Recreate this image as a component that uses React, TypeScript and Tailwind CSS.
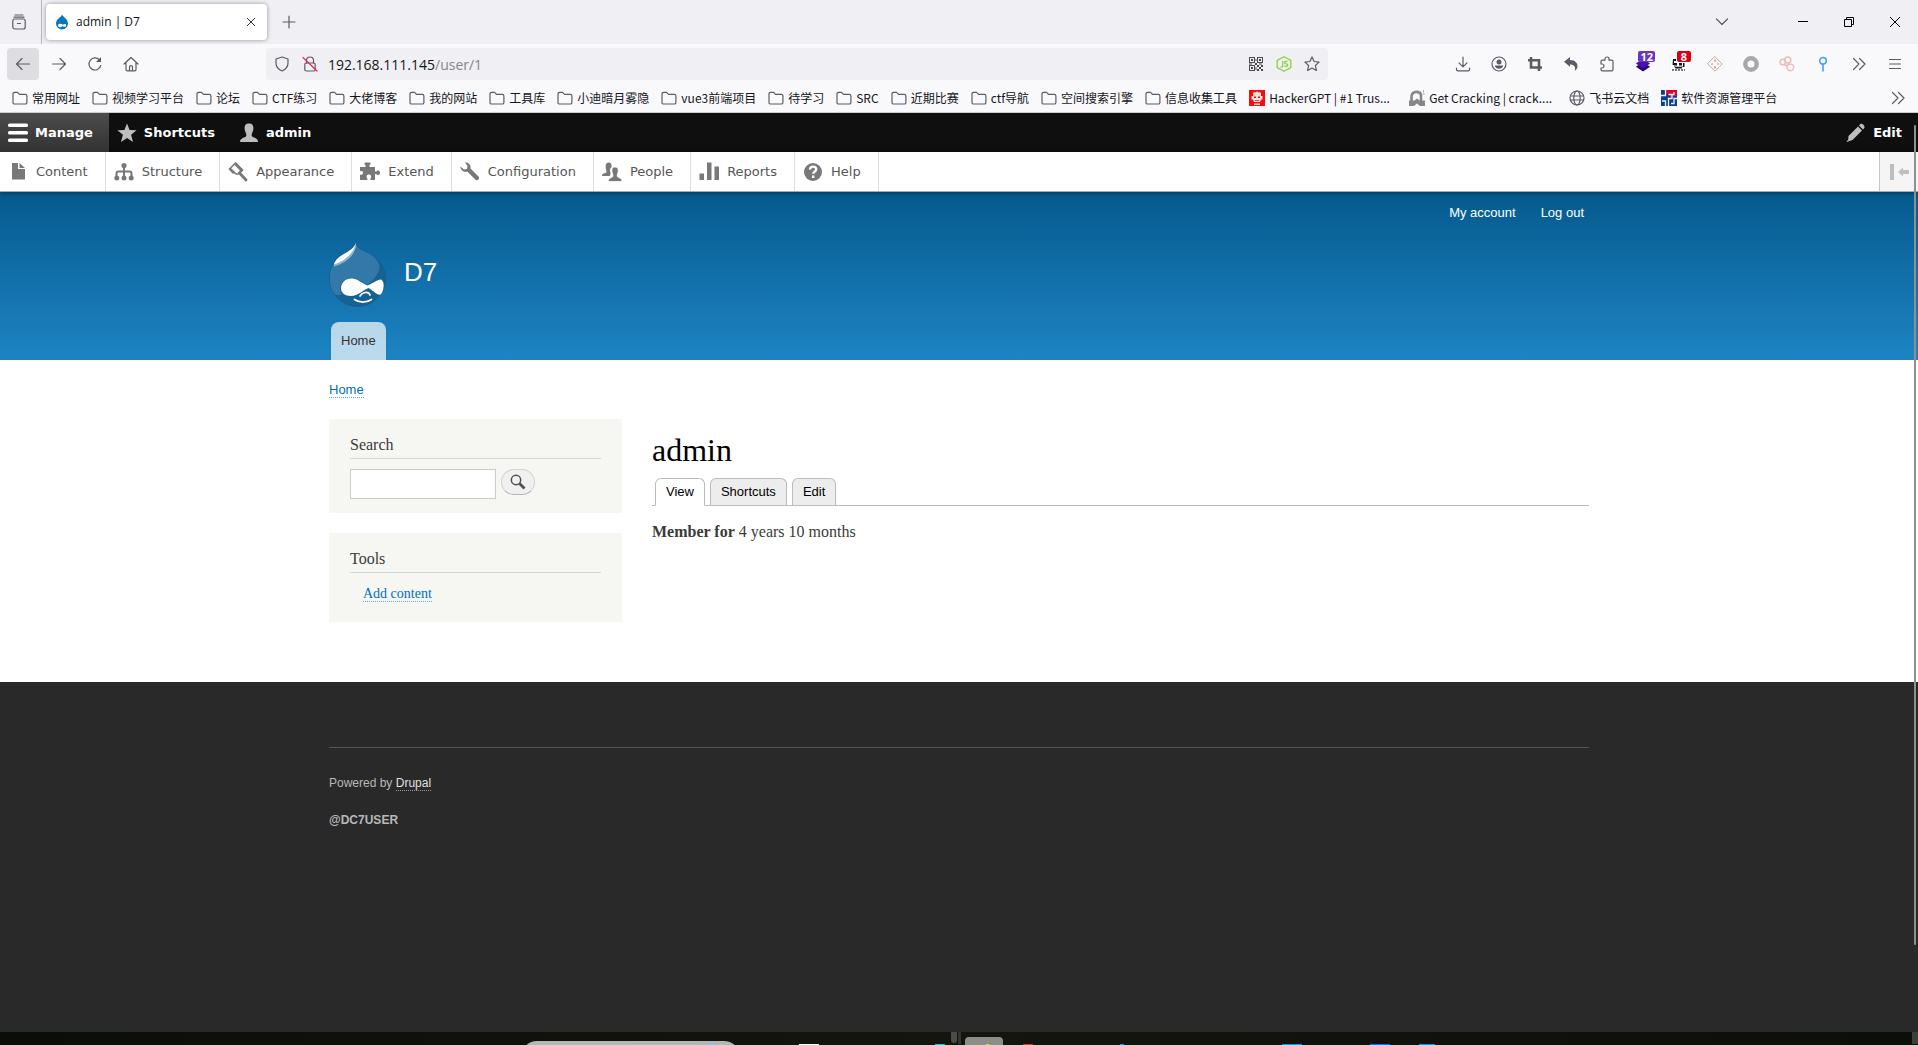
import { ReactNode } from "react";

const folders = [
  "常用网址",
  "视频学习平台",
  "论坛",
  "CTF练习",
  "大佬博客",
  "我的网站",
  "工具库",
  "小迪暗月雾隐",
  "vue3前端项目",
  "待学习",
  "SRC",
  "近期比赛",
  "ctf导航",
  "空间搜索引擎",
  "信息收集工具",
];

// Firefox-style 16px outline icon
function Icon({ children, size = 16, color = "#5b5b66" }: { children: ReactNode; size?: number; color?: string }) {
  return (
    <svg
      width={size}
      height={size}
      viewBox="0 0 16 16"
      fill="none"
      stroke={color}
      strokeWidth="1.2"
      strokeLinecap="round"
      strokeLinejoin="round"
      className="shrink-0"
    >
      {children}
    </svg>
  );
}

// Solid 20px icon used in the admin toolbar
function ToolbarIcon({ children, color = "#787878" }: { children: ReactNode; color?: string }) {
  return (
    <svg width="20" height="20" viewBox="0 0 20 20" fill={color} className="shrink-0">
      {children}
    </svg>
  );
}

function NavButton({ label, active, children }: { label: string; active?: boolean; children: ReactNode }) {
  return (
    <button
      aria-label={label}
      className={`relative mx-0.5 flex h-8 w-8 items-center justify-center rounded ${active ? "bg-[#dddde2]" : ""}`}
    >
      {children}
    </button>
  );
}

function Badge({ color, children }: { color: string; children: ReactNode }) {
  return (
    <span
      className={`absolute top-[3px] right-1 h-[11px] min-w-3.5 rounded-xs px-0.5 text-center font-['Open_Sans',sans-serif] text-[11px] leading-[11px] font-bold text-white ${color}`}
    >
      {children}
    </span>
  );
}

function TabStrip() {
  return (
    <div className="flex h-11 items-center bg-[#f0f0f4]">
      <button aria-label="Recent browsing" className="flex h-11 w-[42px] items-center border-r border-[#b5b5bc] pl-[11px]">
        <Icon>
          <path d="M4 1h8M3 3.200h10" />
          <rect x="1.800" y="5" width="12.400" height="10" rx="2" />
          <path d="M6.500 9.500h3" />
        </Icon>
      </button>
      <div className="ml-1 flex h-9 w-[221px] items-center rounded bg-white pr-1.5 pl-2 shadow-[0_0_4px_rgba(0,0,0,0.4)]">
        <svg width="16" height="16" viewBox="0 0 16 16" className="shrink-0">
          <path d="M8 .5C8.400 2.600 14 4.500 14 9.500a6 6 0 0 1-12 0C2 4.500 7.500 3.500 8 .5z" fill="#0678be" />
          <path d="M4 11.500c0-2.300 3-2.200 4.500-.8 1.500-1 3.700-1.400 3.700.7 0 2-2 1.700-3.600.6C7 13.600 4 13.800 4 11.500z" fill="#fff" />
        </svg>
        <span className="ml-1.5 flex-1 font-['Open_Sans',sans-serif] text-[12px] text-[#15141a]">admin | D7</span>
        <button aria-label="Close tab" className="flex w-5 justify-center">
          <Icon size={12} color="#15141a">
            <path d="M3 3l10 10M13 3L3 13" />
          </Icon>
        </button>
      </div>
      <button aria-label="New tab" className="ml-1.5 flex w-8 items-center justify-center">
        <Icon>
          <path d="M8 2v12M2 8h12" />
        </Icon>
      </button>
      <div className="flex-1" />
      <button aria-label="List all tabs" className="mr-9 flex w-11 justify-center">
        <Icon>
          <path d="M2.500 5L8 10.500 13.500 5" />
        </Icon>
      </button>
      <button aria-label="Minimize" className="flex w-[46px] justify-center">
        <svg width="10" height="10" viewBox="0 0 10 10" stroke="#000" fill="none">
          <path d="M0 4.500h10" />
        </svg>
      </button>
      <button aria-label="Restore" className="flex w-[46px] justify-center">
        <svg width="10" height="10" viewBox="0 0 10 10" stroke="#000" fill="none">
          <path d="M.5 2.500h7v7h-7zM2.500 2.500v-2h7v7h-2" />
        </svg>
      </button>
      <button aria-label="Close window" className="flex w-[46px] justify-center">
        <svg width="10" height="10" viewBox="0 0 10 10" stroke="#000" fill="none">
          <path d="M0 0l10 10M10 0L0 10" />
        </svg>
      </button>
    </div>
  );
}

function AddressBar() {
  return (
    <div className="flex h-8 flex-[9] items-center rounded bg-[#f0f0f4] pr-0.5 pl-2">
      <Icon>
        <path d="M8 1L2 3v4c0 4 2.500 6.500 6 8 3.500-1.500 6-4 6-8V3z" />
      </Icon>
      <span className="ml-3">
        <Icon>
          <path d="M4.500 7V4.500a3.500 3.500 0 0 1 7 0V7" />
          <rect x="2.800" y="7" width="10.400" height="8" rx="1.500" />
          <path d="M1 1.500l14 13.500" stroke="#e22850" />
        </Icon>
      </span>
      <div className="ml-2.5 flex-1 font-['Open_Sans',sans-serif] text-[14px] text-[#15141a]">
        192.168.111.145<span className="text-[#85858c]">/user/1</span>
      </div>
      <button aria-label="QR code" className="flex w-7 justify-center">
        <svg width="14" height="14" viewBox="0 0 14 14" fill="#4a4a52">
          <path
            fillRule="evenodd"
            d="M0 0h6v6H0zM1 1v4h4V1zM2 2h2v2H2zM8 0h6v6H8zM9 1v4h4V1zM10 2h2v2h-2zM0 8h6v6H0zM1 9v4h4V9zM2 10h2v2H2zM8 8h2v2H8zM12 8h2v2h-2zM10 10h2v2h-2zM8 12h2v2H8zM12 12h2v2h-2zM6 6h2v2H6zM0 6.500h3v1H0zM10 6.500h3v1h-3zM6.500 2h1v2h-1zM6.500 10h1v3h-1z"
          />
        </svg>
      </button>
      <button aria-label="Node modules" className="flex w-7 justify-center">
        <svg width="16" height="16" viewBox="0 0 16 16" fill="none" stroke="#8ed23f" strokeWidth="1.300" strokeLinejoin="round">
          <path d="M8 .7l6.800 3.700v7.200L8 15.300l-6.800-3.700V4.400z" />
          <path d="M6.700 5v5.200c0 1-1.200 1.200-2.200.6M11.600 5.700C10 5 8.500 5.300 8.600 6.600c.1 1.600 3.200.8 3.200 2.500 0 1.300-2 1.500-3.400.8" />
        </svg>
      </button>
      <button aria-label="Bookmark this page" className="flex w-7 justify-center">
        <Icon>
          <path d="M8 .9l2.100 4.600 5 .6-3.700 3.400 1 5L8 12l-4.400 2.500 1-5L.9 6.100l5-.6z" />
        </Icon>
      </button>
    </div>
  );
}

function NavBar() {
  return (
    <div className="flex h-10 items-center bg-[#f9f9fb] px-[5px]">
      <NavButton label="Back" active>
        <Icon>
          <path d="M14.500 8h-13M7 2.500L1.500 8 7 13.500" />
        </Icon>
      </NavButton>
      <NavButton label="Forward">
        <Icon>
          <path d="M1.500 8h13M9 2.500L14.500 8 9 13.500" />
        </Icon>
      </NavButton>
      <NavButton label="Reload">
        <Icon>
          <path d="M13.800 9.500A6 6 0 1 1 12.500 4" />
          <path d="M14 1v5H9z" fill="#5b5b66" stroke="none" />
        </Icon>
      </NavButton>
      <NavButton label="Home">
        <Icon>
          <path d="M1 8l7-6.500L15 8M3 7v6.500c0 .8.500 1.300 1.300 1.300h7.400c.8 0 1.300-.5 1.300-1.300V7" />
          <path d="M6.500 14.500V11c0-1.800 3-1.800 3 0v3.500" />
        </Icon>
      </NavButton>
      <div className="flex-1" />
      <AddressBar />
      <div className="flex-1" />
      <NavButton label="Downloads">
        <Icon>
          <path d="M8 1v9.500M4 6.800l4 4 4-4M1.500 12v1.500c0 .8.500 1.300 1.300 1.300h10.400c.8 0 1.300-.5 1.300-1.300V12" />
        </Icon>
      </NavButton>
      <NavButton label="Account">
        <Icon>
          <circle cx="8" cy="8" r="7" />
          <circle cx="8" cy="6" r="2.500" fill="#5b5b66" stroke="none" />
          <path d="M3.800 9.500h8.400c-.5 2.200-2.200 3.300-4.200 3.300s-3.700-1.100-4.200-3.300z" fill="#5b5b66" stroke="none" />
        </Icon>
      </NavButton>
      <NavButton label="Screenshot">
        <svg width="16" height="16" viewBox="0 0 16 16" fill="none" stroke="#5b5b66" strokeWidth="2.600">
          <path d="M4 1v10.500h11M1 4.300h11V15" />
        </svg>
      </NavButton>
      <NavButton label="Undo">
        <svg width="16" height="16" viewBox="0 0 16 16" fill="#5b5b66">
          <path d="M1 5.800L7 1v3c5 0 7.500 3 7.500 6 0 2-1 3.800-2.700 4.800C13 11 11 8.500 7 8.500v2.300z" />
        </svg>
      </NavButton>
      <NavButton label="Extensions">
        <Icon>
          <path d="M2 6V5.500C2 4.700 2.500 4.200 3.300 4.200H6V3a2 2 0 0 1 4 0v1.200h2.700c.8 0 1.300.5 1.300 1.300v8c0 .8-.5 1.300-1.300 1.300H3.300c-.8 0-1.300-.5-1.300-1.300V12h1a2 2 0 0 0 0-4H2z" />
        </Icon>
      </NavButton>
      <NavButton label="Layers">
        <svg width="16" height="16" viewBox="0 0 18 18">
          <path d="M1 12l8-5 8 5-8 5.500z" fill="#2b0a72" />
          <path d="M1 8.500l8-5.500 8 5.500-8 5.500z" fill="#4a0fb5" />
        </svg>
        <Badge color="bg-[#6a35c2]">12</Badge>
      </NavButton>
      <NavButton label="Blocker">
        <svg width="16" height="16" viewBox="0 0 16 16" fill="#151515">
          <path fill="#fff" d="M0 0h16v16H0z" />
          <path d="M2 3h3v2H3v4H1.500zM3 7h3v2.500H3zM8 7h3v2.500H8zM12 7h1.500v4H12zM3 10l2 .8h5l2-.8-1.500 2.500h-6z" />
          <path d="M1 14h13" stroke="#777" strokeWidth="2" strokeDasharray="2 1" />
        </svg>
        <Badge color="bg-[#d80012]">8</Badge>
      </NavButton>
      <NavButton label="Container">
        <Icon color="#c39a8d">
          <path d="M8 .8L15.200 8 8 15.200.8 8z" strokeWidth=".9" />
          <path d="M8 4v1.200M8 10.800V12M4.800 8h.4M10.800 8h.4" strokeWidth="1.600" />
        </Icon>
      </NavButton>
      <NavButton label="Proxy">
        <svg width="16" height="16" viewBox="0 0 16 16" fill="none" stroke="#a8a8a8" strokeWidth="4.400">
          <circle cx="8" cy="8" r="5.700" />
        </svg>
      </NavButton>
      <NavButton label="Rings">
        <svg width="16" height="16" viewBox="0 0 16 16" fill="none" stroke="#ecbcbc" strokeWidth="1.500">
          <circle cx="3.800" cy="6" r="2.800" />
          <circle cx="8.800" cy="4" r="3" />
          <circle cx="11.300" cy="11.300" r="3.400" />
          <path d="M5 8.500l3 1.500" />
        </svg>
      </NavButton>
      <NavButton label="Pin">
        <svg width="16" height="16" viewBox="0 0 16 16" fill="none" stroke="#409eff" strokeWidth="1.600">
          <circle cx="8" cy="4.800" r="3.300" />
          <path d="M8 8v7.500" />
        </svg>
      </NavButton>
      <NavButton label="More tools">
        <Icon>
          <path d="M2.500 2.500L8 8l-5.500 5.500M8.500 2.500L14 8l-5.500 5.500" />
        </Icon>
      </NavButton>
      <NavButton label="Menu">
        <Icon>
          <path d="M2.500 3.500h11M2.500 8h11M2.500 12.500h11" />
        </Icon>
      </NavButton>
    </div>
  );
}

function BookmarksBar() {
  return (
    <div className="flex h-[29px] items-center gap-3 border-b border-[#cccccf] bg-[#f9f9fb] pr-3 pl-3 font-['Noto_Sans_CJK_SC',sans-serif] text-[12px] leading-4 whitespace-nowrap text-[#15141a]">
      {folders.map((name) => (
        <a key={name} href="#" className="flex items-center gap-1">
          <Icon>
            <path d="M1 4c0-1 .6-1.700 1.600-1.700h3L7.500 4.300h5.800c1 0 1.600.7 1.600 1.600v6.500c0 1-.6 1.600-1.600 1.600H2.600c-1 0-1.600-.6-1.600-1.600z" />
          </Icon>
          {name}
        </a>
      ))}
      <a href="#" className="flex w-[148px] items-center gap-1">
        <svg width="16" height="16" viewBox="0 0 16 16" className="shrink-0">
          <path fill="#f80d0d" d="M0 0h16v16H0z" />
          <path
            d="M4 6V3l1.500-1 1.500.5L8 1l1 1.500 1.500-.5L12 3v3h1.500v3.500H12L11 12H5L4 9.500H2.500V6zM5 13.500h6V15H5z"
            fill="#fde0dd"
          />
          <path d="M5 6.500h2V8H5zM9 6.500h2V8H9zM6 10h4v.8H6z" fill="#e01010" />
        </svg>
        HackerGPT | #1 Trus...
      </a>
      <a href="#" className="flex w-[148px] items-center gap-1">
        <svg width="16" height="16" viewBox="0 0 16 16" className="shrink-0">
          <path d="M2.500 11V7a5 5 0 0 1 9.500-2.200V11" fill="none" stroke="#868686" strokeWidth="2.600" />
          <path d="M0 10.500h5.500l2.500-2 2.500 2H16V16h-5l-3-2.500L5 16H0z" fill="#868686" />
          <path d="M11 1l1.500 1.500M14.500 0v2.500M13.500 4H16" stroke="#b0b0b0" />
        </svg>
        Get Cracking | crack....
      </a>
      <a href="#" className="flex items-center gap-1">
        <Icon>
          <circle cx="8" cy="8" r="7" />
          <ellipse cx="8" cy="8" rx="3.200" ry="7" />
          <path d="M1.500 6h13M1.500 10h13" />
        </Icon>
        飞书云文档
      </a>
      <a href="#" className="flex items-center gap-1">
        <svg width="16" height="16" viewBox="0 0 16 16" className="shrink-0">
          <path fill="#0b3f8f" d="M0 0h16v16H0z" />
          <path fill="#e2002b" d="M5 0h11v6h-5v2H9V4H5z" />
          <path d="M4.500 0v5.500H0M7.500 4.500h5.500V2M4.500 16v-5H1M7.500 16V8.500H11V5M16 8.500h-3v5h-3" fill="none" stroke="#eef2fa" strokeWidth="1.300" />
        </svg>
        软件资源管理平台
      </a>
      <div className="flex-1" />
      <button aria-label="Show more bookmarks">
        <Icon>
          <path d="M2.500 2.500L8 8l-5.500 5.500M8.500 2.500L14 8l-5.500 5.500" />
        </Icon>
      </button>
    </div>
  );
}

const trayItems = [
  { label: "Content", icon: <path d="M4 1h6v6h7v10.500H4zM11.500 1L17 6h-5.500z" /> },
  {
    label: "Structure",
    icon: (
      <>
        <circle cx="10" cy="3.500" r="2.600" />
        <path d="M10 5v11M2.500 15v-3.500c0-1.500.8-2 2-2h11c1.200 0 2 .5 2 2V15" fill="none" stroke="#787878" strokeWidth="2" />
        <circle cx="2.800" cy="16" r="2.500" />
        <circle cx="10" cy="16" r="2.500" />
        <circle cx="17.200" cy="16" r="2.500" />
      </>
    ),
  },
  {
    label: "Appearance",
    icon: (
      <>
        <path d="M1.500 7L7.500 1l7 7-3.500 3.500c-1 1-2.500.5-3.500 0z" fill="none" stroke="#787878" strokeWidth="1.500" />
        <path d="M6 2.500L8 .5 15.500 8 11 12.500 9.500 11 12 8.500z" />
        <path d="M.8 7.500L5 12l2-2-4.500-4.500z" />
        <path d="M12 11.500l6 6.500" stroke="#787878" strokeWidth="2.800" strokeLinecap="round" />
      </>
    ),
  },
  {
    label: "Extend",
    icon: (
      <path d="M0 5h5.500V3C4 2.500 4 .5 5.500.5h4C11 .5 11 2.500 9.500 3v2H15v4.500h1.500c.5-1.600 3.500-1.500 3.500 1.200s-3 2.800-3.500 1.300H15V18h-4.500v-2c1.300-.8 1-3.600-1.600-3.600S6 15.200 7.300 16v2H0v-5.500c1.800.8 3-.2 3-1.700S1.800 8.500 0 9.300z" />
    ),
  },
  {
    label: "Configuration",
    icon: (
      <path d="M5 .5C8.500 0 11 2.500 10.500 6.500l8 8c1.800 2-1 5-3 3.200l-8-8C4 10.500.5 8.500.5 4.500L4 7.500l3-.5.500-3z" />
    ),
  },
  {
    label: "People",
    icon: (
      <>
        <path d="M6.500.5c3 0 3.500 2.500 2.800 5C7.500 6.500 7.800 9 8.600 11L8 14H0c0-3 3.200-2.500 4.400-3.500C5 9 3.600 8 3.600 5S4.500.5 6.500.5z" />
        <path
          d="M13 5c3 0 3.500 2.200 3.200 4.800-.2 1.700-1.400 2.700-.8 4.700C16.500 16 20 15.800 20 19.500H6.200c0-3.700 3.600-3.500 4.600-5 .5-2-.6-3-.8-4.700C9.700 7.200 10 5 13 5z"
          stroke="#fff"
          strokeWidth=".8"
        />
      </>
    ),
  },
  { label: "Reports", icon: <path d="M.5 11.500h4.500V18H.5zM8 .5h4.500V18H8zM15.500 4.500H20V18h-4.500z" /> },
  {
    label: "Help",
    icon: (
      <>
        <circle cx="10" cy="10" r="9" />
        <path d="M7 7.500c0-4 6.200-3.600 6.200-.2 0 2.400-3 2.200-3 4.500M10.200 13.500v2.500" fill="none" stroke="#fff" strokeWidth="2.400" />
      </>
    ),
  },
];

function AdminToolbar() {
  return (
    <div className="relative z-10 font-['DejaVu_Sans',sans-serif] text-[13px] leading-5">
      <nav className="flex h-[39px] bg-[#0f0f0f] font-bold text-white">
        <a href="#" className="flex items-center gap-[7px] bg-linear-to-b from-[#4c4c4c] to-[#333] pr-4 pl-2">
          <ToolbarIcon color="#fff">
            <rect y=".5" width="20" height="3.600" rx="1.500" />
            <rect y="8" width="20" height="3.600" rx="1.500" />
            <rect y="15.500" width="20" height="3.600" rx="1.500" />
          </ToolbarIcon>
          Manage
        </a>
        <a href="#" className="flex items-center gap-[7px] pr-4 pl-2">
          <ToolbarIcon color="#bebebe">
            <path d="M10 .5l2.600 6.500 7 .3-5.500 4.400L16 19l-6-4-6 4 1.900-7.300L.4 7.300l7-.3z" />
          </ToolbarIcon>
          Shortcuts
        </a>
        <a href="#" className="flex items-center gap-[7px] pr-4 pl-2">
          <ToolbarIcon color="#bebebe">
            <path d="M10 .5c4 0 4.800 3 4.200 6.500-.4 2.500-2 3.500-1.400 6 1 2 6.200 1.500 6.200 6H1c0-4.500 5.200-4 6.200-6 .6-2.500-1-3.500-1.400-6C5.200 3.500 6 .5 10 .5z" />
          </ToolbarIcon>
          admin
        </a>
        <button className="ml-auto flex items-center gap-[7px] pr-4">
          <ToolbarIcon color="#bebebe">
            <path d="M2.500 13L12 3.500 16 7.500 6.500 17 2 18.500zM13 2.500l1.500-1.500c1.500-1 5 2 3.800 4L17 6.500zM1 17l1.500 1.500L.8 19z" />
          </ToolbarIcon>
          Edit
        </button>
      </nav>
      <nav className="flex h-10 border-b border-[#aaa] bg-white text-[#565656] shadow-[0_0_5px_rgba(0,0,0,0.6)]">
        {trayItems.map((item) => (
          <a key={item.label} href="#" className="flex items-center gap-2 border-r border-[#ddd] pr-[17px] pl-2">
            <ToolbarIcon>{item.icon}</ToolbarIcon>
            {item.label}
          </a>
        ))}
        <button aria-label="Vertical orientation" className="ml-auto flex w-[39px] items-center border-l border-[#c4c4c4] bg-[#f5f5f5] pl-2.5">
          <svg width="20" height="16" viewBox="0 0 20 16" fill="#bebebe">
            <path d="M0 0h4v16H0zM8 8l5-4.500V6h6v4h-6v2.500z" />
          </svg>
        </button>
      </nav>
    </div>
  );
}

function Druplicon() {
  return (
    <svg width="57" height="65" viewBox="0 0 57 65" className="shrink-0">
      <path
        d="M26.500.5C28 7 34 8.500 40 11.500 50 17 56.500 26 56.500 36.500a28 28 0 0 1-56 0C.5 26 5 19 12 14 19 9 26 7 26.500.5z"
        fill="#176294"
        stroke="#1c5a85"
        strokeWidth=".8"
      />
      <path
        d="M26.500 1C28 7 34 8.500 40 11.500c5 2.700 10 8 10.500 13C50 33 44 38 38 43c-6-4-14-9-22-5-6 3-6 11-3 15H6C2.500 48 .8 43 .8 36.500.8 26 5 19 12 14 19 9 26 7 26.500 1z"
        fill="#3278a8"
      />
      <path d="M27 1c1 9-7 19-22 23.500 0-4 4-8 9-10.500C20 10.500 26 7 27 1z" fill="#8fb5ce" />
      <path d="M26.500.5C27 7 19 18 5 22.500 6 18 10 15 14 12.500 20 9 26 6 26.500.5z" fill="#fff" />
      <path
        d="M12 46.500C12 40 17 36 23.500 36.500 29 37 34 42 38.500 43.500 43 42 47 38 52 37.500c4 1.500 3 11 .2 14.500-3 3-9-4.500-12.700-6C34 48 29 54 22 54c-6 0-10-3-10-7.500z"
        fill="#fff"
      />
      <path d="M25.500 57.500c5 3.500 12 3.500 17 0M31 54c2-3.500 8-5.500 10-1" fill="none" stroke="#fff" strokeWidth="1.700" strokeLinecap="round" />
    </svg>
  );
}

function SiteHeader() {
  return (
    <header className="h-[168px] bg-linear-to-b from-[#055a8e] to-[#1d84c3]">
      <div className="mx-auto max-w-[1290px] px-[15px] pt-3">
        <nav className="flex justify-end gap-[25px] pr-[5px] text-[13px] leading-[18px] text-white">
          <a href="#">My account</a>
          <a href="#">Log out</a>
        </nav>
        <div className="mt-5 flex items-start">
          <Druplicon />
          <a href="#" className="mt-3.5 ml-[18px] text-[26px] leading-8 text-white">
            D7
          </a>
        </div>
        <nav className="mt-[15px] ml-0.5 flex">
          <a href="#" className="flex h-[38px] items-center rounded-t-lg bg-white/70 px-2.5 text-[13px] text-[#333]">
            Home
          </a>
        </nav>
      </div>
    </header>
  );
}

function Main() {
  return (
    <main className="bg-white">
      <div className="mx-auto max-w-[1290px] px-[15px] pt-5 pb-[60px]">
        <nav className="text-[13px] leading-5">
          <a href="#" className="border-b border-dotted border-[#5ea8d3] text-[#0071b3]">
            Home
          </a>
        </nav>
        <div className="mt-[19px] flex gap-[30px] font-['Liberation_Serif',serif] text-[#3b3b3b]">
          <aside className="flex w-[293px] shrink-0 flex-col gap-5">
            <section className="bg-[#f6f6f2] px-[21px] pt-4 pb-3.5">
              <h2 className="border-b border-[#d3d7d9] pb-[3px] text-[16px] leading-5">Search</h2>
              <form className="mt-2.5 flex items-start gap-[5px]">
                <input type="text" aria-label="Search" className="h-[30px] w-[146px] border border-[#ccc] bg-white px-1 text-[14px]" />
                <button
                  type="button"
                  aria-label="Submit search"
                  className="flex h-[26px] w-[34px] items-center justify-center rounded-full border border-[#d4d4d4] border-b-[#b4b4b4] bg-[#f0f0f0]"
                >
                  <svg width="16" height="16" viewBox="0 0 16 16" fill="none" stroke="#505050">
                    <circle cx="6" cy="6" r="4.700" strokeWidth="1.500" />
                    <path d="M9.500 9.500l5 5" strokeWidth="2.800" />
                  </svg>
                </button>
              </form>
            </section>
            <section className="bg-[#f6f6f2] px-[21px] pt-4 pb-[18px]">
              <h2 className="border-b border-[#d3d7d9] pb-[3px] text-[16px] leading-5">Tools</h2>
              <div className="mt-[11px] pl-[13px] text-[14px] leading-5">
                <a href="#" className="border-b border-dotted border-[#5ea8d3] text-[#0071b3]">
                  Add content
                </a>
              </div>
            </section>
          </aside>
          <section className="flex-1">
            <h1 className="mt-[13px] text-[32px] leading-9 text-black">admin</h1>
            <nav className="mt-2.5 flex gap-[5px] border-b border-[#bbb] pl-[3px] font-['Liberation_Sans',sans-serif] text-[13px] leading-[26px] text-black">
              <a href="#" className="-mb-px rounded-t-md border border-[#bbb] border-b-white bg-white px-2.5">
                View
              </a>
              <a href="#" className="rounded-t-md border border-b-0 border-[#bbb] bg-[#ededed] px-2.5">
                Shortcuts
              </a>
              <a href="#" className="rounded-t-md border border-b-0 border-[#bbb] bg-[#ededed] px-2.5">
                Edit
              </a>
            </nav>
            <p className="mt-3.5 text-[16px] leading-6">
              <b>Member for</b> 4 years 10 months
            </p>
          </section>
        </div>
      </div>
    </main>
  );
}

function Taskbar() {
  return (
    <div className="relative h-[13px] overflow-hidden bg-linear-to-r from-[#0b0d08] via-[#15150f] to-[#0c0e0a]">
      <div className="absolute top-[9px] left-[521px] h-8 w-[219px] rounded-2xl bg-[#b5b5b3]" />
      <div className="absolute top-0 left-[951px] h-[11px] w-1.5 rounded-b bg-[#4a4d47]" />
      <div className="absolute top-0 left-[958px] h-3 w-[3px] bg-[#30352f]" />
      <div className="absolute top-[5px] left-[965px] h-8 w-[38px] rounded bg-[#8d8e88]" />
      <div className="absolute top-3 left-[708px] h-1 w-1.5 bg-[#8cc6ee]" />
      <div className="absolute top-3 left-[799px] h-1 w-5 bg-[#f5f5f5]" />
      <div className="absolute top-3 left-[935px] h-1 w-2.5 bg-[#2cc5d8]" />
      <div className="absolute top-3 left-[986px] h-1 w-[3px] bg-[#e3e333]" />
      <div className="absolute top-3 left-[1023px] h-1 w-2.5 bg-[#d83c2c]" />
      <div className="absolute top-3 left-[1120px] h-1 w-1 bg-[#1c8de0]" />
      <div className="absolute top-3 left-[1282px] h-1 w-5 bg-[#1296db]" />
      <div className="absolute top-3 left-[1370px] h-1 w-5 bg-[#1677ff]" />
      <div className="absolute top-3 left-[1419px] h-1 w-4 bg-[#1296db]" />
      <div className="absolute top-0 right-0 h-3 w-1.5 bg-[#3b3f3a]" />
    </div>
  );
}

export default function App() {
  return (
    <div className="relative flex min-h-screen flex-col font-['Liberation_Sans',sans-serif]">
      <TabStrip />
      <NavBar />
      <BookmarksBar />
      <AdminToolbar />
      <SiteHeader />
      <Main />
      <footer className="flex-1 bg-[#292929] text-[12px] leading-5 text-[#b8b8b8]">
        <div className="mx-auto max-w-[1290px] px-[15px] pt-[65px]">
          <div className="border-t border-[#555] pt-[25px]">
            <p>
              Powered by{" "}
              <a href="#" className="border-b border-dotted border-[#949494] text-[#e0e0e0]">
                Drupal
              </a>
            </p>
            <p className="mt-[17px] font-bold">@DC7USER</p>
          </div>
        </div>
      </footer>
      <Taskbar />
      {/* thin overlay scrollbar */}
      <div className="absolute top-[125px] right-[2px] z-20 h-[820px] w-0.5 rounded bg-[#8f8f8f]" />
    </div>
  );
}
